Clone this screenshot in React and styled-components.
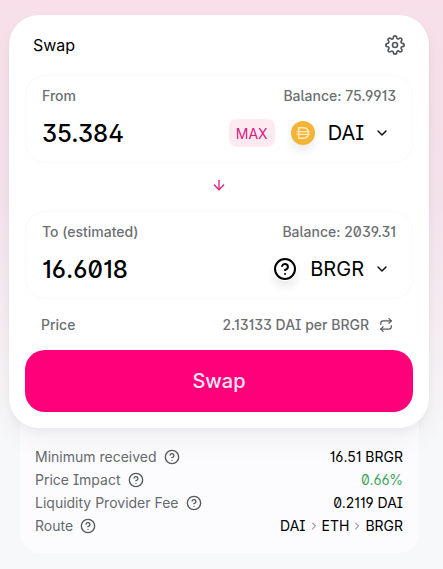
import React, { useState } from 'react';
import styled, { createGlobalStyle } from 'styled-components';
import { FiArrowDown, FiChevronDown, FiChevronRight, FiHelpCircle, FiRepeat, FiSettings } from 'react-icons/fi';

const GlobalStyle = createGlobalStyle`
    * {
        box-sizing: border-box;
    }
    body {
        margin: 0;
        min-height: 100vh;
        color: #000000;
        font-family: "Inter", sans-serif;
        font-feature-settings: "ss01" on, "ss02" on, "cv01" on, "cv03" on, "cv05" off;
        background: #f7f8fa linear-gradient(180deg, #f8dfe9 0, #f5e3ec 200px, #f7f8fa 440px) no-repeat;
    }
    button, input {
        font-family: inherit;
        font-feature-settings: inherit;
    }
`

const Page = styled.main`
    padding: 15px 14px 16px 9px;
`

const Card = styled.section`
    position: relative;
    z-index: 1;
    padding: 16px;
    border-radius: 30px;
    background: #ffffff;
    box-shadow: 0 0 1px rgba(0, 0, 0, 0.04), 0 4px 8px rgba(0, 0, 0, 0.04), 0 16px 24px rgba(0, 0, 0, 0.04);
`

const Row = styled.div`
    display: flex;
    align-items: center;
    justify-content: space-between;
`

const Header = styled(Row)`
    height: 28px;
    margin-bottom: 16px;
    padding: 0 8px;
`

const Title = styled.h1`
    margin: 0;
    font-size: 16px;
    font-weight: 400;
`

const IconButton = styled.button`
    display: flex;
    padding: 0;
    border: 0;
    background: none;
    color: ${props => props.$color || '#55585c'};
    cursor: pointer;
`

const Panel = styled.div`
    height: 88px;
    padding: 8px 16px;
    border: 1px solid #fafafb;
    border-radius: 20px;
`

const Caption = styled(Row)`
    height: 22px;
    color: #6c6f74;
    font-size: 14px;
    font-weight: 500;
`

const AmountRow = styled(Row)`
    height: 54px;
`

const Amount = styled.input`
    flex: 1;
    width: 0;
    min-width: 0;
    padding: 0;
    border: 0;
    outline: 0;
    background: none;
    color: #000000;
    font-size: 24px;
    font-weight: 500;
`

const MaxButton = styled.button`
    height: 28px;
    margin-right: 16px;
    padding: 0 7px;
    border: 0;
    border-radius: 8px;
    background: #fdeaf1;
    color: #d5217f;
    font-size: 14px;
    cursor: pointer;
`

const TokenButton = styled.button`
    display: flex;
    align-items: center;
    gap: 10px;
    padding: 0 6px 0 0;
    border: 0;
    background: none;
    color: #000000;
    font-size: 20px;
    font-weight: 400;
    cursor: pointer;
`

const TokenIcon = styled.span`
    display: flex;
    margin-right: 3px;
    border-radius: 50%;
    box-shadow: 0 6px 10px rgba(0, 0, 0, 0.08);
`

const Switch = styled.div`
    display: flex;
    justify-content: center;
    height: 48px;
    padding-top: 14px;
`

const Price = styled(Row)`
    height: 51px;
    padding: 0 20px 0 16px;
    color: #6c6f74;
    font-size: 14px;
    font-weight: 500;
`

const PriceValue = styled.span`
    display: flex;
    align-items: center;
    gap: 10px;
`

const SwapButton = styled.button`
    width: 100%;
    height: 62px;
    border: 0;
    border-radius: 20px;
    background: #ff007a;
    color: #ffe5f2;
    font-size: 20px;
    font-weight: 500;
    cursor: pointer;
`

const Details = styled.dl`
    margin: -20px 10px 0 11px;
    padding: 37px 16px 16px 15px;
    border-radius: 20px;
    background: #fcfcfe;
    font-size: 14px;
`

const DetailRow = styled(Row)`
    height: 23px;
`

const Term = styled.dt`
    display: flex;
    align-items: center;
    gap: 7px;
    color: #66696e;
`

const Value = styled.dd`
    display: flex;
    align-items: center;
    gap: 2px;
    margin: 0;
    color: ${props => props.$color || '#000000'};
`

const RouteArrow = styled(FiChevronRight)`
    color: #66696e;
`

const DaiLogo = () => (
    <svg width="24" height="24" viewBox="0 0 24 24" aria-hidden="true">
        <circle cx="12" cy="12" r="12" fill="#f3b438" />
        <g fill="none" stroke="#ffeabb" strokeWidth="1.5">
            <path d="M7.7 6.8H12c3.4 0 5.4 2.2 5.4 5.2s-2 5.2-5.4 5.2H7.7z" />
            <path d="M5.6 10.6h13M5.6 13.4h13" strokeWidth="1.1" />
        </g>
    </svg>
)

const Detail = ({ label, color, children }) => (
    <DetailRow>
        <Term>
            {label}
            <IconButton aria-label={`About ${label}`}><FiHelpCircle size={16} /></IconButton>
        </Term>
        <Value $color={color}>{children}</Value>
    </DetailRow>
)

const CurrencyPanel = ({ id, label, balance, value, onChange, symbol, icon, max }) => (
    <Panel>
        <Caption>
            <label htmlFor={id}>{label}</label>
            <span>Balance: {balance}</span>
        </Caption>
        <AmountRow>
            <Amount id={id} inputMode="decimal" value={value} onChange={e => onChange(e.target.value)} />
            {max && <MaxButton>MAX</MaxButton>}
            <TokenButton>
                <TokenIcon>{icon}</TokenIcon>
                {symbol}
                <FiChevronDown size={16} />
            </TokenButton>
        </AmountRow>
    </Panel>
)

export default function App() {
    const [from, setFrom] = useState('35.384');
    const [to, setTo] = useState('16.6018');

    return (
        <>
            <GlobalStyle />
            <Page>
                <Card>
                    <Header>
                        <Title>Swap</Title>
                        <IconButton aria-label="Settings"><FiSettings size={20} /></IconButton>
                    </Header>
                    <CurrencyPanel
                        id="from"
                        label="From"
                        balance="75.9913"
                        value={from}
                        onChange={setFrom}
                        symbol="DAI"
                        icon={<DaiLogo />}
                        max
                    />
                    <Switch>
                        <IconButton aria-label="Switch tokens" $color="#d5217f"><FiArrowDown size={16} /></IconButton>
                    </Switch>
                    <CurrencyPanel
                        id="to"
                        label="To (estimated)"
                        balance="2039.31"
                        value={to}
                        onChange={setTo}
                        symbol="BRGR"
                        icon={<FiHelpCircle size={24} />}
                    />
                    <Price>
                        <span>Price</span>
                        <PriceValue>
                            2.13133 DAI per BRGR
                            <IconButton aria-label="Invert price"><FiRepeat size={14} /></IconButton>
                        </PriceValue>
                    </Price>
                    <SwapButton>Swap</SwapButton>
                </Card>
                <Details>
                    <Detail label="Minimum received">16.51 BRGR</Detail>
                    <Detail label="Price Impact" color="#3fa45b">0.66%</Detail>
                    <Detail label="Liquidity Provider Fee">0.2119 DAI</Detail>
                    <Detail label="Route">
                        DAI <RouteArrow size={12} /> ETH <RouteArrow size={12} /> BRGR
                    </Detail>
                </Details>
            </Page>
        </>
    )
}
